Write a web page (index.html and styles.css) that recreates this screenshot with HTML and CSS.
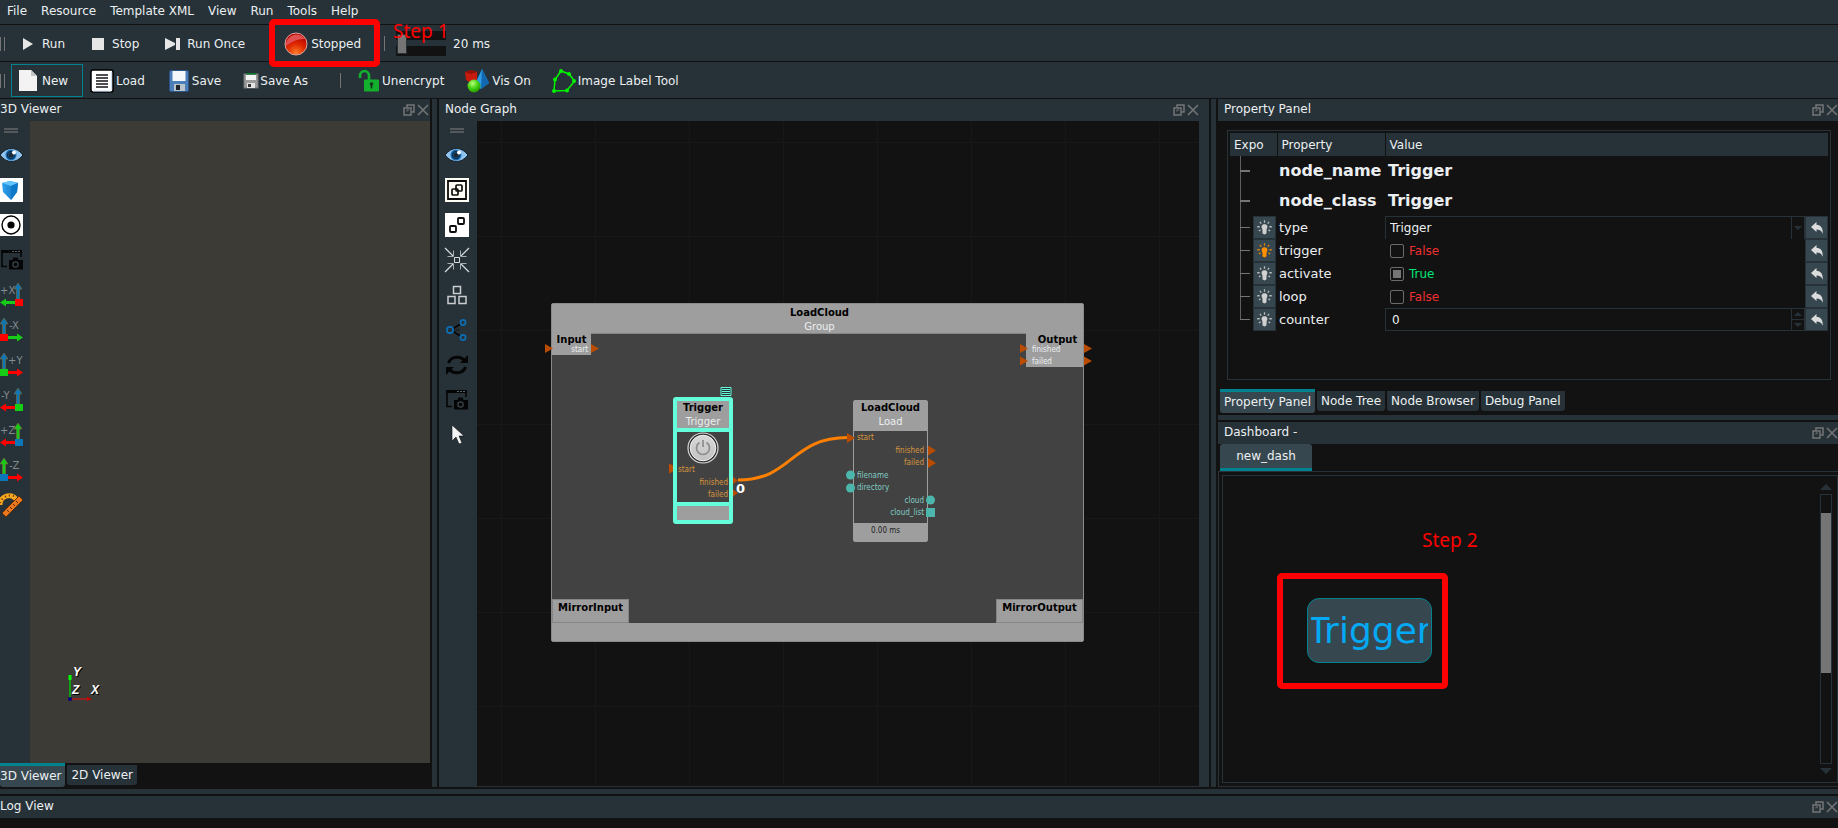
FILE: index.html
```
<!DOCTYPE html>
<html lang="en">
<head>
<meta charset="utf-8">
<title>Node Graph Editor</title>
<link rel="stylesheet" href="styles.css">
</head>
<body>
<svg class="defs" aria-hidden="true">
  <defs>
    <radialGradient id="red" cx="0.5" cy="0.9" r="0.8"><stop offset="0" stop-color="#ff7a2a"/><stop offset="0.5" stop-color="#e02a00"/><stop offset="1" stop-color="#b40000"/></radialGradient>
    <linearGradient id="blue" x1="0" x2="1"><stop offset="0" stop-color="#2fa4f0"/><stop offset="1" stop-color="#0f6cb8"/></linearGradient>
    <radialGradient id="green" cx="0.4" cy="0.3" r="0.8"><stop offset="0" stop-color="#b6ff7a"/><stop offset="0.5" stop-color="#43d010"/><stop offset="1" stop-color="#1c8a00"/></radialGradient>
    <linearGradient id="metal" x1="0" y1="0" x2="0" y2="1"><stop offset="0" stop-color="#d8d8d8"/><stop offset="1" stop-color="#c2c2c2"/></linearGradient>
    <symbol id="restore" viewBox="0 0 12 12"><path d="M4 3.500V1h7v7H8.500" fill="none" stroke="currentColor" stroke-width="1.500"/><rect x="1" y="4" width="7" height="7" fill="none" stroke="currentColor" stroke-width="1.500"/><path d="M4 7.500V6h2" fill="none" stroke="currentColor"/></symbol>
    <symbol id="close" viewBox="0 0 12 12"><path d="M1 1l10 10M11 1L1 11" fill="none" stroke="currentColor" stroke-width="1.500"/></symbol>
    <symbol id="eye" viewBox="0 0 24 24"><path d="M0 12Q5 5.500 11.500 5.500T23 12Q18 18.500 11.500 18.500T0 12z" fill="#8fc3ee" stroke="#15212b"/><circle cx="11" cy="12" r="5.500" fill="#1a72bd"/><circle cx="11" cy="12" r="3.500" fill="none" stroke="#0d3050" stroke-width="1.500"/><circle cx="11" cy="12" r="2.500" fill="#1d2a33"/><circle cx="14" cy="9.500" r="2" fill="#fff"/></symbol>
    <symbol id="shot" viewBox="0 0 24 24"><path d="M7 18.500H2V3.500h19V9" fill="none" stroke="#050505" stroke-width="1.600"/><path d="M1 2h21v3H1z" fill="#050505"/><path d="M12 3.500h2M15 3.500h2M18 3.500h2" stroke="#56646c"/><path d="M9 12h3.500l1-2.500h4l1 2.500H23v9.500H9z" fill="#050505"/><circle cx="15.500" cy="16.500" r="2.700" fill="none" stroke="#39464d" stroke-width="1.200"/></symbol>
    <symbol id="bulb" viewBox="0 0 14 14"><path d="M5 8.500C3.600 6.500 4.200 4 7 4s3.400 2.500 2 4.500L8.800 12.500 7 13.600 5.200 12.500z" fill="currentColor"/><path d="M7 .3v2.200M2.700 1.700l1.300 1.600M11.300 1.700L10 3.300M.2 6.300h2.300M13.800 6.300h-2.300M1.800 10.300l1.500-1.300M12.200 10.300L10.700 9" stroke="currentColor" stroke-width="1.200" opacity=".85"/></symbol>
    <symbol id="undo" viewBox="0 0 12 12"><path d="M0 5L5.500 0v2.700C10 3 12 5.800 11.800 11.800 10.300 8.600 8.800 7.500 5.500 7.500V10z" fill="#dcdcdc"/></symbol>
    <symbol id="up" viewBox="0 0 8 16"><path d="M4 0L8 6H5.500v10h-3V6H0z" stroke="#7b7040" stroke-width=".6"/></symbol>
  </defs>
</svg>

<nav class="menubar" aria-label="Main menu">
  <button>File</button><button>Resource</button><button>Template XML</button><button>View</button><button>Run</button><button>Tools</button><button>Help</button>
</nav>

<div class="toolbar" role="toolbar" aria-label="Run controls">
  <span class="grip"></span>
  <button class="tool run"><svg width="12" height="12" viewBox="0 0 12 12"><path d="M1 0l10 6L1 12z" fill="#e6e6e6"/></svg>Run</button>
  <button class="tool stop"><svg width="12" height="12" viewBox="0 0 12 12"><path d="M0 0h12v12H0z" fill="#e6e6e6"/></svg>Stop</button>
  <button class="tool once"><svg width="16" height="12" viewBox="0 0 16 12"><path d="M0 0l10 5V0h5v12h-5V7L0 12z" fill="#e6e6e6"/><path d="M10.500 0v12" stroke="#263238"/></svg>Run Once</button>
  <button class="tool stopped"><svg width="24" height="24" viewBox="0 0 24 24"><circle cx="12" cy="12" r="11" fill="url(#red)" stroke="#d8a9a9"/><path d="M2 14A10.500 10.500 0 0 1 21 7Q12 6 2 14z" fill="#e05050"/></svg>Stopped<span class="mark"></span></button>
  <span class="divider"></span>
  <label class="delay"><input type="range" min="0" max="100" value="2" aria-label="Delay"><span>20 ms</span><strong class="step step-one">Step 1</strong></label>
</div>

<div class="toolbar files" role="toolbar" aria-label="File tools">
  <span class="grip"></span>
  <button class="tool new"><svg width="20" height="24" viewBox="0 0 20 24"><path d="M1 1h12l6 6v15H1z" fill="#f3f3f3"/><path d="M13 1l6 6h-6z" fill="#c3c6c8"/></svg>New</button>
  <button class="tool load"><svg width="24" height="24" viewBox="0 0 24 24"><rect x="1" y="1" width="22" height="22" rx="2" fill="#fff" stroke="#000" stroke-width="1.500"/><path d="M3 22h18M21.500 3v18" stroke="#cfe2f5"/><path d="M6 6h12M6 9h12M6 12h12M6 15h12M6 18h12" stroke="#161616" stroke-width="1.500"/></svg>Load</button>
  <button class="tool save"><svg width="20" height="24" viewBox="0 0 20 24"><rect x=".5" y="1.500" width="19" height="21" rx="1.500" fill="#4c7fba" stroke="#2b5489"/><path d="M3.500 2h13v10h-13z" fill="#f5f8fb"/><path d="M5 15h11v7H5z" fill="#b9c3cc"/><path d="M7 16h4v5H7z" fill="#1f2327"/></svg>Save</button>
  <button class="tool saveas"><svg width="16" height="16" viewBox="0 0 16 16"><rect x="1" y="1" width="14" height="14" fill="#9b9b9b" stroke="#777"/><path d="M3 .8h10" stroke="#0b7a2b" stroke-width="1.600"/><path d="M3 2h10v5H3z" fill="#f4f4f4"/><path d="M4 10h8v5H4z" fill="#e4e4e4"/><path d="M5 11h3v3H5z" fill="#333"/></svg>Save As</button>
  <span class="divider"></span>
  <button class="tool crypt"><svg width="22" height="24" viewBox="0 0 22 24"><path d="M2 9V7a4 4.500 0 0 1 9 0v5" fill="none" stroke="#12b02c" stroke-width="2.600"/><rect x="6" y="10.500" width="15" height="12" rx="1" fill="#12b02c"/><circle cx="13.500" cy="15" r="1.800" fill="#17351e"/><path d="M13.500 15v4.500" stroke="#17351e" stroke-width="1.600"/></svg>Unencrypt</button>
  <button class="tool vis"><svg width="24" height="24" viewBox="0 0 24 24"><path d="M0 3l6-2 6 2v8l-6 3-5-3z" fill="#c81b0e"/><path d="M0 3l6 2 6-2-6-2z" fill="#8f120a"/><path d="M17 0l7 14-8 6-6-5z" fill="#2e9be6"/><path d="M17 0l7 14-8 6z" fill="#1268ae"/><circle cx="9" cy="17" r="6.500" fill="url(#green)"/></svg>Vis On</button>
  <button class="tool label"><svg width="24" height="24" viewBox="0 0 24 24"><path d="M9 2l8 3 5.500 7L15 21.500 2 22 3 10.500z" fill="none" stroke="#00f400" stroke-width="1.500"/><g fill="#00f400"><circle cx="9" cy="2" r="2"/><circle cx="17" cy="5" r="2"/><circle cx="22" cy="12" r="2"/><circle cx="15" cy="21.500" r="2"/><circle cx="2" cy="22" r="2"/><circle cx="3" cy="10.500" r="2"/></g></svg>Image Label Tool</button>
</div>

<main class="docks">
  <section class="dock viewer">
    <header class="title"><h2>3D Viewer</h2><button aria-label="Float"><svg width="12" height="12"><use href="#restore"/></svg></button><button aria-label="Close"><svg width="12" height="12"><use href="#close"/></svg></button></header>
    <div class="work">
      <div class="side" role="toolbar" aria-label="Viewer tools">
        <span class="grip-h"></span>
        <button aria-label="Visibility"><svg><use href="#eye"/></svg></button>
        <button aria-label="Solid"><svg viewBox="0 0 24 24"><path d="M0 0h23v24H0z" fill="#fff"/><path d="M2 5l8-2 8 2-1 9-6 8-8-8z" fill="url(#blue)"/><path d="M2 5l8-2 8 2-7 3z" fill="#63c4ff"/><path d="M11 8l7-3-1 9-6 8z" fill="#0d77c9"/></svg></button>
        <button aria-label="Center"><svg viewBox="0 0 24 24"><path d="M0 1h23v22H0z" fill="#fff"/><circle cx="11" cy="12" r="9" fill="none" stroke="#000" stroke-width="1.400"/><circle cx="11" cy="12" r="3.600"/></svg></button>
        <button aria-label="Screenshot"><svg><use href="#shot"/></svg></button>
        <button aria-label="View plus X"><svg viewBox="0 0 24 24"><use href="#up" x="14" width="8" height="16" fill="#0c76b8"/><path d="M0 19.500l6-4V18h9v3H6v2.500z" fill="#17cc17"/><path d="M15 16h8v7h-8z" fill="#f00"/><text x="0" y="11">+X</text></svg></button>
        <button aria-label="View minus X"><svg viewBox="0 0 24 24"><use href="#up" x="0" width="8" height="16" fill="#0c76b8"/><path d="M23 19.500l-6-4V18H7v3h10v2.500z" fill="#17cc17"/><path d="M0 16h8v7H0z" fill="#f00"/><text x="9" y="11">-X</text></svg></button>
        <button aria-label="View plus Y"><svg viewBox="0 0 24 24"><use href="#up" x="0" width="8" height="16" fill="#0c76b8"/><path d="M23 19.500l-6-4V18H7v3h10v2.500z" fill="#f00"/><path d="M0 16h8v7H0z" fill="#17cc17"/><text x="8" y="11">+Y</text></svg></button>
        <button aria-label="View minus Y"><svg viewBox="0 0 24 24"><use href="#up" x="14" width="8" height="16" fill="#0c76b8"/><path d="M0 19.500l6-4V18h9v3H6v2.500z" fill="#f00"/><path d="M15 16h8v7h-8z" fill="#17cc17"/><text x="1" y="11">-Y</text></svg></button>
        <button aria-label="View plus Z"><svg viewBox="0 0 24 24"><use href="#up" x="14" width="8" height="16" fill="#17cc17"/><path d="M0 19.500l6-4V18h9v3H6v2.500z" fill="#f00"/><path d="M15 16h8v7h-8z" fill="#0c76b8"/><text x="0" y="11">+Z</text></svg></button>
        <button aria-label="View minus Z"><svg viewBox="0 0 24 24"><use href="#up" x="0" width="8" height="16" fill="#17cc17"/><path d="M23 19.500l-6-4V18H7v3h10v2.500z" fill="#f00"/><path d="M0 16h8v7H0z" fill="#0c76b8"/><text x="9" y="11">-Z</text></svg></button>
        <button aria-label="Measure"><svg viewBox="0 0 24 24"><path d="M0 12A9 9 0 0 1 16 6" fill="none" stroke="#f7a51d" stroke-width="5"/><path d="M0 10A11 11 0 0 1 16 4" fill="none" stroke="#5a3705" stroke-width="2" stroke-dasharray="1 3"/><path d="M2 20L19 3l4 4L6 24z" fill="#e8771d" stroke="#5a2c05"/><path d="M7 17l2 2M10 14l2 2M13 11l2 2M16 8l2 2" stroke="#5a2c05"/></svg></button>
      </div>
      <div class="scene">
        <svg class="axes" width="50" height="50" viewBox="0 0 50 50" role="img" aria-label="Axes"><path d="M10 38V15" stroke="#12a012" stroke-width="2"/><path d="M10 14v5" stroke="#0f0" stroke-width="3"/><path d="M10 38h20" stroke="#e80c0c"/><path d="M27 36l5 2-5 2z" fill="#c00"/><circle cx="10" cy="38" r="2" fill="#000080"/><text x="13" y="15">Y</text><text x="12" y="33">Z</text><text x="31" y="33">X</text></svg>
      </div>
    </div>
    <div class="tabs"><button class="tab on">3D Viewer</button><button class="tab">2D Viewer</button></div>
  </section>

  <div class="split"></div>

  <section class="dock graph">
    <header class="title"><h2>Node Graph</h2><button aria-label="Float"><svg width="12" height="12"><use href="#restore"/></svg></button><button aria-label="Close"><svg width="12" height="12"><use href="#close"/></svg></button></header>
    <div class="work">
      <div class="side" role="toolbar" aria-label="Graph tools">
        <span class="grip-h"></span>
        <button aria-label="Visibility"><svg><use href="#eye"/></svg></button>
        <button aria-label="Group"><svg viewBox="0 0 24 24"><path d="M0 0h24v24H0z" fill="#fdfdf6"/><path d="M3 3h18v18H3z" fill="none" stroke="#0c0c0c" stroke-width="1.800"/><rect x="7" y="11" width="6" height="6" rx="1" fill="none" stroke="#0c0c0c" stroke-width="1.700"/><rect x="11" y="7" width="6" height="6" rx="1" fill="none" stroke="#0c0c0c" stroke-width="1.700"/></svg></button>
        <button aria-label="Ungroup"><svg viewBox="0 0 24 24"><path d="M0 0h24v24H0z" fill="#fff"/><rect x="5" y="13" width="6" height="6" rx="1" fill="none" stroke="#0c0c0c" stroke-width="1.800"/><rect x="13" y="5" width="6" height="6" rx="1" fill="none" stroke="#0c0c0c" stroke-width="1.800"/></svg></button>
        <button aria-label="Collapse"><svg viewBox="0 0 24 24"><path d="M0 0l8 8M24 0l-8 8M0 24l8-8M24 24l-8-8" stroke="#d9dcdc" stroke-width="1.200"/><path d="M2.500 8.500h6v-6M21.500 8.500h-6v-6M2.500 15.500h6v6M21.500 15.500h-6v6" fill="none" stroke="#a6adb0"/><path d="M9.500 9.500h5v5h-5z" fill="none" stroke="#d9dcdc"/></svg></button>
        <button aria-label="Arrange"><svg viewBox="0 0 24 24" fill="none" stroke="#c9cdcf" stroke-width="1.500"><rect x="8.500" y="3.500" width="7" height="7"/><rect x="3" y="13.500" width="7" height="7"/><rect x="14" y="13.500" width="7" height="7"/></svg></button>
        <button aria-label="Links"><svg viewBox="0 0 24 24"><path d="M6 12l11-7M6 12l11 7" stroke="#050505" stroke-width="1.500"/><path d="M9 12h5" stroke="#050505" stroke-dasharray="1 1"/><g fill="#263238" stroke="#0d6eb4" stroke-width="1.700"><circle cx="5" cy="12" r="3.200"/><circle cx="18" cy="4.500" r="2.600"/><circle cx="18" cy="19.500" r="2.600"/></g></svg></button>
        <button aria-label="Refresh"><svg viewBox="0 0 24 24"><path d="M3.500 10A9 8 0 0 1 19 7M20.500 14A9 8 0 0 1 5 17" fill="none" stroke="#050505" stroke-width="3"/><path d="M23 2v8h-8zM1 22v-8h8z" fill="#050505"/></svg></button>
        <button aria-label="Screenshot"><svg><use href="#shot"/></svg></button>
        <button aria-label="Pointer"><svg viewBox="0 0 24 24"><path d="M7 2v16l4-4 3 7 3-1-3-7h5z" fill="#f4f4f4" stroke="#111" stroke-width=".6"/></svg></button>
      </div>
      <div class="canvas">
        <article class="group">
          <header><b>LoadCloud</b><span>Group</span></header>
          <div class="corner input"><b>Input</b><span>start</span></div>
          <div class="corner output"><b>Output</b><span>finished</span><span>failed</span></div>
          <div class="corner mirror-in"><b>MirrorInput</b></div>
          <div class="corner mirror-out"><b>MirrorOutput</b></div>
          <footer></footer>
        </article>
        <article class="node load-node">
          <header><b>LoadCloud</b><span>Load</span></header>
          <ul><li class="flow">start</li><li class="flow out">finished</li><li class="flow out">failed</li><li>filename</li><li>directory</li><li class="out">cloud</li><li class="out">cloud_list</li></ul>
          <footer>0.00 ms</footer>
        </article>
        <article class="node trigger-node">
          <header><b>Trigger</b><span>Trigger</span></header>
          <div class="trigger-body">
            <button aria-label="Fire trigger"><svg width="32" height="32" viewBox="0 0 32 32"><circle cx="16" cy="16" r="15" fill="none" stroke="#d9d9d9" stroke-width="1.200"/><circle cx="16" cy="16" r="14" fill="#2e2e2e"/><circle cx="16" cy="16" r="12.800" fill="url(#metal)" stroke="#f2f2f2"/><path d="M12.500 10.500a6.500 6.500 0 1 0 7 0M16 8v7" fill="none" stroke="#8c8c8c" stroke-width="1.700"/></svg></button>
            <ul><li class="flow">start</li><li class="flow out">finished</li><li class="flow out">failed</li></ul>
          </div>
          <footer></footer>
        </article>
        <svg class="wires" width="722" height="664" viewBox="477 121 722 664" aria-hidden="true">
          <path d="M738 480C793 480 790 437.500 848 437.500" fill="none" stroke="#ff8000" stroke-width="3"/>
          <g fill="#b94c00"><path d="M545 344l8 4.500-8 4.500zM591 344l8 4.500-8 4.500zM1020 344l8 4.500-8 4.500zM1084 344l8 4.500-8 4.500zM1020 356.500l8 4.500-8 4.500zM1084 356.500l8 4.500-8 4.500zM847 433l8 5-8 5zM928 445.500l8 5-8 5zM928 458l8 5-8 5zM669 463.500l4 2v6l-4 2zM733 477l5 3.500-5 3.500zM733 489.500l5 3.500-5 3.500z"/></g>
          <g fill="#4db6ac"><circle cx="850.500" cy="475" r="4.500"/><circle cx="850.500" cy="488" r="4.500"/><circle cx="930.500" cy="500" r="4.500"/><path d="M926 508h9v9h-9z"/></g>
          <path d="M721 387.500h10v8h-10z" fill="#263238" stroke="#64ffda"/><path d="M722 389.500h8M722 391.500h8M722 393.500h8" stroke="#64ffda"/>
          <text class="count" x="736" y="493">0</text>
        </svg>
      </div>
      <div class="rail"></div>
    </div>
  </section>

  <div class="split"></div>

  <div class="right">
    <section class="dock props">
      <header class="title"><h2>Property Panel</h2><button aria-label="Float"><svg width="12" height="12"><use href="#restore"/></svg></button><button aria-label="Close"><svg width="12" height="12"><use href="#close"/></svg></button></header>
      <div class="frame">
        <table>
          <colgroup><col class="c-expo"><col class="c-prop"><col></colgroup>
          <thead><tr><th>Expo</th><th>Property</th><th>Value</th></tr></thead>
          <tbody>
            <tr class="big"><td class="branch"></td><td>node_name</td><td>Trigger</td></tr>
            <tr class="big"><td class="branch"></td><td>node_class</td><td>Trigger</td></tr>
            <tr><td class="branch"><button class="bulb" aria-label="Expose type"><svg width="15" height="15"><use href="#bulb"/></svg></button></td><td><label for="type">type</label></td><td><div class="val"><span class="combo"><select id="type"><option>Trigger</option></select><span class="open"><i class="drop"></i></span></span><button class="reset" aria-label="Reset type"><svg width="12" height="12"><use href="#undo"/></svg></button></div></td></tr>
            <tr><td class="branch"><button class="bulb lit" aria-label="Expose trigger"><svg width="15" height="15"><use href="#bulb"/></svg></button></td><td><label for="trigger">trigger</label></td><td><div class="val"><span class="check no"><input type="checkbox" id="trigger">False</span><button class="reset" aria-label="Reset trigger"><svg width="12" height="12"><use href="#undo"/></svg></button></div></td></tr>
            <tr><td class="branch"><button class="bulb" aria-label="Expose activate"><svg width="15" height="15"><use href="#bulb"/></svg></button></td><td><label for="activate">activate</label></td><td><div class="val"><span class="check yes"><input type="checkbox" id="activate" checked>True</span><button class="reset" aria-label="Reset activate"><svg width="12" height="12"><use href="#undo"/></svg></button></div></td></tr>
            <tr><td class="branch"><button class="bulb" aria-label="Expose loop"><svg width="15" height="15"><use href="#bulb"/></svg></button></td><td><label for="loop">loop</label></td><td><div class="val"><span class="check no"><input type="checkbox" id="loop">False</span><button class="reset" aria-label="Reset loop"><svg width="12" height="12"><use href="#undo"/></svg></button></div></td></tr>
            <tr class="last"><td class="branch"><button class="bulb" aria-label="Expose counter"><svg width="15" height="15"><use href="#bulb"/></svg></button></td><td><label for="counter">counter</label></td><td><div class="val"><span class="spin"><input type="text" id="counter" value="0"><span class="steps"><button aria-label="Increase"><i class="tri-up"></i></button><button aria-label="Decrease"><i class="drop"></i></button></span></span><button class="reset" aria-label="Reset counter"><svg width="12" height="12"><use href="#undo"/></svg></button></div></td></tr>
          </tbody>
        </table>
      </div>
      <div class="tabs"><button class="tab on">Property Panel</button><button class="tab">Node Tree</button><button class="tab">Node Browser</button><button class="tab">Debug Panel</button></div>
    </section>
    <div class="split-h"></div>
    <section class="dock dash">
      <header class="title"><h2>Dashboard -</h2><button aria-label="Float"><svg width="12" height="12"><use href="#restore"/></svg></button><button aria-label="Close"><svg width="12" height="12"><use href="#close"/></svg></button></header>
      <div class="dash-tabs"><button>new_dash</button></div>
      <div class="outer"><div class="board">
        <strong class="step step-two">Step 2</strong>
        <span class="mark mark-two"></span>
        <button class="big-trigger"><span>Trigger</span></button>
        <div class="scroll"><i class="tri-up"></i><div class="track"><div class="thumb"></div></div><i class="drop"></i></div>
      </div></div>
    </section>
  </div>
</main>
<div class="split-h"></div>
<section class="dock log">
  <header class="title"><h2>Log View</h2><button aria-label="Float"><svg width="12" height="12"><use href="#restore"/></svg></button><button aria-label="Close"><svg width="12" height="12"><use href="#close"/></svg></button></header>
</section>
</body>
</html>
```
FILE: styles.css
```
:root {
  --bg: #121212;
  --panel: #263238;
  --raised: #37474f;
  --teal: #00838f;
  --text: #eceff1;
  --muted: #757575;
  --grey: #9e9e9e;
  --mint: #64ffda;
}
* { box-sizing: border-box; }
body {
  margin: 0;
  height: 100vh;
  display: flex;
  flex-direction: column;
  overflow: hidden;
  background: var(--bg);
  color: var(--text);
  font: 12px/16px "DejaVu Sans", sans-serif;
}
button, input, select { font: inherit; color: inherit; background: none; border: 0; margin: 0; padding: 0; }
h2 { margin: 0; font: inherit; }
ul { margin: 0; padding: 0; list-style: none; }
svg { display: block; flex: none; }
.defs { position: absolute; width: 0; height: 0; }

.menubar { display: flex; gap: 14px; height: 25px; padding: 0 7px 3px; background: var(--panel); border-bottom: 1px solid var(--bg); }
.toolbar { display: flex; align-items: center; height: 37px; padding-top: 1px; background: var(--panel); border-bottom: 1px solid var(--bg); }
.grip { width: 5px; height: 14px; border: solid var(--muted); border-width: 0 1px; margin: 0 6px 0 0; }
.tool { position: relative; display: flex; align-items: center; height: 33px; white-space: nowrap; }
.run { gap: 8px; padding: 0 14px 0 11px; }
.stop { gap: 8px; padding: 0 14px 0 13px; }
.once { gap: 6px; padding: 0 12px; }
.stopped { gap: 3px; margin-left: 27px; padding-right: 23px; }
.divider { width: 1px; height: 15px; background: var(--muted); }
.delay { position: relative; display: flex; align-items: center; gap: 7px; margin-left: 11px; }
input[type="range"] {
  appearance: none; width: 50px; height: 25px;
  background: linear-gradient(var(--bg) 0 9px, var(--panel) 9px 15px, var(--bg) 15px);
}
input[type="range"]::-webkit-slider-thumb { appearance: none; width: 10px; height: 20px; background: var(--muted); border: 1px solid var(--panel); }
.step { position: absolute; color: #f00; font: 19px/24px "Noto Sans", sans-serif; white-space: nowrap; }
.step-one { left: -3px; top: -12px; }
.mark { position: absolute; border: 6px solid #f00; border-radius: 5px; }
.stopped .mark { inset: -8px 4px -7px -15px; }

.new { gap: 4px; width: 72px; padding-left: 6px; border: 1px solid var(--teal); }
.load { gap: 2px; padding-left: 7px; }
.save { gap: 3px; padding-left: 24px; }
.saveas { gap: 1px; padding-left: 22px; }
.files .divider { margin: 0 17px 0 32px; }
.crypt { gap: 2px; }
.vis { gap: 3px; padding-left: 21px; }
.label { gap: 2px; padding-left: 21px; }

.docks { flex: 1; min-height: 0; display: grid; grid-template-columns: 430fr 9px 770fr 9px 620fr; }
.dock { display: flex; flex-direction: column; min-width: 0; min-height: 0; }
.split { border: solid var(--bg); border-width: 0 2px; background: var(--panel); }
.split-h { height: 9px; flex: none; border: solid var(--bg); border-width: 2px 0; background: var(--panel); }
.title { display: flex; align-items: center; gap: 2px; height: 22px; flex: none; padding: 0 1px 3px 0; background: var(--panel); }
.title h2 { flex: 1; }
.title button { color: var(--muted); padding-top: 3px; }
.graph .title { padding-left: 6px; padding-right: 10px; }
.props .title, .dash .title { padding-left: 6px; }
.right .title, .log .title { padding-right: 0; }
.work { flex: 1; min-height: 0; display: flex; background: var(--panel); }
.side { display: flex; flex-direction: column; gap: 11px; width: 30px; }
.side svg { width: 24px; height: 24px; overflow: visible; }
.side text { font: 10px "DejaVu Sans", sans-serif; fill: #858b8e; }
.grip-h { width: 14px; height: 5px; margin: 7px 0 -1px 4px; border: solid #56595b; border-width: 2px 0; }
.graph .side { width: 38px; padding-left: 6px; }
.graph .grip-h { margin-left: 5px; }
.scene { position: relative; flex: 1; background: #3d3b36; }
.axes { position: absolute; left: 30px; bottom: 52px; }
.axes text { font: italic bold 12px "Liberation Sans", sans-serif; fill: #fff; text-shadow: 1px 1px #000; }
.tabs { display: flex; gap: 2px; height: 24px; flex: none; align-items: flex-start; background: var(--bg); }
.tab { height: 20px; margin-top: 2px; padding: 0 4px 1px; background: var(--panel); border-radius: 0 0 3px 3px; white-space: nowrap; }
.tab.on { height: 24px; margin-top: 0; background: var(--raised); border-top: 3px solid var(--teal); }
.viewer .tab.on { padding-left: 0; }

.canvas {
  position: relative; flex: 1; overflow: hidden; background-color: var(--bg);
  background-image: linear-gradient(90deg, #181818 1px, transparent 1px), linear-gradient(#181818 1px, transparent 1px);
  background-size: 94px 94px; background-position: 24px 21px;
}
.graph .work { border-bottom: 1px solid var(--panel); }
.rail { width: 10px; border-right: 1px solid var(--panel); }
.group, .node, .wires { position: absolute; }
.wires { left: 0; top: 0; }
.canvas b { color: #000; font-size: 10px; line-height: 14px; white-space: nowrap; }
.canvas header, .corner { display: flex; flex-direction: column; align-items: center; background: var(--grey); }
.canvas header span { font-size: 10px; line-height: 14px; }
.group { left: 74px; top: 182px; width: 533px; height: 339px; background: #424242; border: 1px solid #8a8a8a; border-radius: 2px; }
.group header { height: 30px; padding: 2px 0 0 4px; border-bottom: 1px solid #858585; }
.group footer { position: absolute; inset: auto 0 0; height: 18px; background: var(--grey); }
.corner { position: absolute; }
.corner span, .node li, .node footer { font: 8px/12px "DejaVu Sans Condensed", "DejaVu Sans", sans-serif; }
.input, .output { top: 29px; padding-top: 1px; }
.input b, .output b { line-height: 12px; margin-bottom: -2px; }
.input { left: 0; width: 39px; height: 22px; }
.input span { align-self: flex-end; padding-right: 3px; }
.output { right: 0; width: 57px; height: 34px; align-items: flex-start; padding-left: 6px; }
.output b { align-self: center; }
.mirror-in, .mirror-out { bottom: 18px; height: 24px; padding-top: 1px; border: 1px solid #858585; }
.mirror-in { left: 0; width: 77px; }
.mirror-out { right: 0; width: 87px; }
.node { display: flex; flex-direction: column; background: #424242; }
.node ul { flex: 1; display: flex; flex-direction: column; color: #80cbc4; }
.node li { flex: 1; padding: 0 3px; }
.node .out { text-align: right; }
.node .flow { color: #d8953c; }
.load-node { left: 376px; top: 279px; width: 75px; height: 142px; border: 1px solid var(--grey); border-radius: 2px; }
.load-node header { height: 30px; }
.load-node ul { padding: 1px 0 3px; }
.load-node footer { height: 18px; padding: 2px 10px 0 0; background: var(--grey); color: #212121; text-align: center; }
.trigger-node { left: 196px; top: 276px; width: 60px; height: 127px; border: 4px solid var(--mint); border-radius: 3px; }
.trigger-node header { height: 27px; }
.trigger-body { flex: 1; display: flex; flex-direction: column; align-items: center; border: solid var(--mint); border-width: 4px 0; }
.trigger-body ul { align-self: stretch; }
.trigger-body li { padding: 0 1px; }
.trigger-node footer { height: 14px; background: var(--grey); }
.count { font: bold 13px "DejaVu Sans", sans-serif; fill: #fff; }

.right { display: flex; flex-direction: column; min-width: 0; min-height: 0; }
.frame { height: 250px; margin: 9px 7px 9px 9px; padding: 2px; border: 1px solid var(--panel); }
.frame table { width: 100%; table-layout: fixed; border-collapse: collapse; }
.c-expo { width: 47px; }
.c-prop { width: 108px; }
th { height: 23px; padding: 0 4px; font-weight: 400; text-align: left; background: var(--panel); border-right: 1px solid var(--bg); }
th:last-child { border-right: 0; }
td { height: 23px; padding: 0 0 0 2px; font-size: 13px; }
td:last-child { padding: 0; font-size: 12px; }
.big td { height: 30px; padding-left: 2px; font-size: 16px; font-weight: 700; }
.big td:last-child { padding-left: 3px; font-size: 16px; }
td.branch {
  padding: 0 1px 0 23px;
  background: linear-gradient(var(--muted), var(--muted)) 10px 50% / 10px 1px no-repeat, linear-gradient(#606060, #606060) 10px 0 / 1px 100% no-repeat;
}
.big td.branch { background-size: 10px 2px, 1px 100%; }
.last td.branch { background-size: 10px 1px, 1px 50%; }
.bulb, .reset { display: flex; align-items: center; justify-content: center; width: 23px; height: 23px; background: var(--raised); border: 1px solid var(--panel); color: #d0d0d0; }
.lit { color: #ff8f00; }
.val { display: flex; height: 23px; }
.combo, .spin, .check { flex: 1; display: flex; align-items: center; }
.combo { border: 1px solid var(--panel); border-bottom: 0; height: 23px; }
.combo select { flex: 1; appearance: none; height: 22px; padding: 0 4px; }
.open { display: flex; align-items: center; justify-content: center; width: 13px; height: 22px; border-left: 1px solid var(--panel); }
.drop, .tri-up { width: 0; height: 0; border: 4px solid transparent; }
.drop { border-top-color: var(--panel); border-bottom: 0; }
.tri-up { border-bottom-color: var(--panel); border-top: 0; }
.spin { border: 1px solid var(--panel); }
.spin input { flex: 1; min-width: 0; padding: 0 6px; }
.steps { display: flex; flex-direction: column; width: 13px; height: 21px; border-left: 1px solid var(--panel); }
.steps button { flex: 1; display: flex; align-items: center; justify-content: center; }
.steps button + button { border-top: 1px solid var(--panel); }
.check { gap: 5px; padding-left: 5px; }
.check input { appearance: none; width: 14px; height: 14px; border: 1px solid #6b6b6b; border-radius: 2px; padding: 2px; }
.check input:checked { background: var(--muted) content-box; }
.no { color: #f03030; }
.yes { color: #00e676; }
.right .tabs { padding-left: 2px; }

.dash { flex: 1; }
.dash-tabs { flex: none; padding-left: 2px; }
.dash-tabs button { display: block; width: 92px; height: 27px; background: var(--raised); border-bottom: 3px solid var(--teal); border-radius: 3px 3px 0 0; }
.outer { flex: 1; display: flex; padding: 3px 0 3px 3px; border: 1px solid var(--panel); border-right: 0; }
.board { position: relative; flex: 1; display: flex; justify-content: flex-end; padding: 8px 5px; border: 1px solid var(--panel); }
.step-two { left: 199px; top: 52px; }
.mark-two { left: 54px; top: 97px; width: 171px; height: 116px; }
.big-trigger { position: absolute; left: 84px; top: 122px; width: 125px; height: 65px; padding: 0 3px; background: var(--raised); border: 1px solid var(--teal); border-radius: 12px; color: #03a9f4; font-size: 36px; line-height: 44px; }
.big-trigger span { display: flex; justify-content: center; overflow: hidden; }
.scroll { display: flex; flex-direction: column; align-items: center; gap: 4px; width: 12px; }
.scroll .drop, .scroll .tri-up { border-width: 6px; }
.scroll .drop { border-bottom: 0; }
.scroll .tri-up { border-top: 0; }
.track { flex: 1; width: 12px; padding-top: 18px; border: 1px solid var(--panel); }
.thumb { height: 64%; background: var(--muted); }
.log { height: 32px; flex: none; }
```
